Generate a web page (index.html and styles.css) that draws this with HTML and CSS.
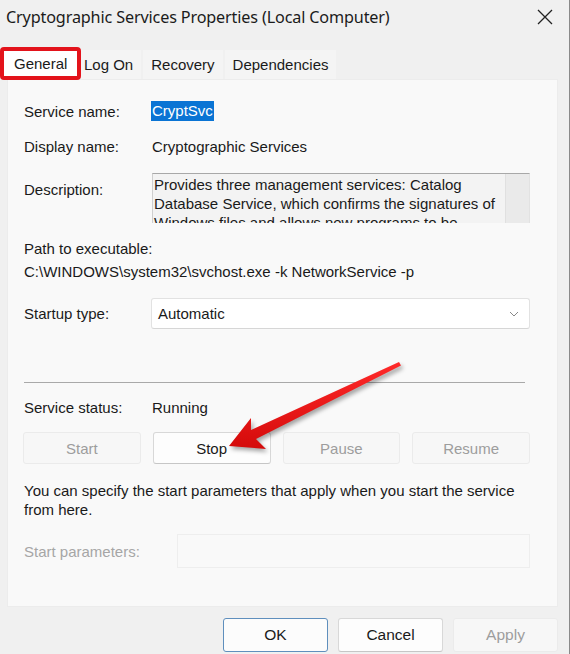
FILE: index.html
```html
<!DOCTYPE html>
<html>
<head>
<meta charset="utf-8">
<link rel="stylesheet" href="styles.css">
</head>
<body>
<div class="window">
  <header class="titlebar">
    <span class="title">Cryptographic Services Properties (Local Computer)</span>
    <svg class="close" width="16" height="16" viewBox="0 0 16 16"><path d="M1 1 L15 15 M15 1 L1 15" stroke="#222" stroke-width="1.3" fill="none"/></svg>
  </header>
  <nav class="tabs">
    <span class="tab active">General</span>
    <span class="tab">Log On</span>
    <span class="tab">Recovery</span>
    <span class="tab">Dependencies</span>
  </nav>
  <section class="panel">
    <div class="row r-service"><span class="label">Service name:</span><span class="sel">CryptSvc</span></div>
    <div class="row r-display"><span class="label">Display name:</span><span>Cryptographic Services</span></div>
    <div class="row r-desc"><span class="label desc-label">Description:</span>
      <div class="descbox">
        <div class="desctext">Provides three management services: Catalog Database Service, which confirms the signatures of Windows files and allows new programs to be installed.</div>
        <div class="scroll"></div>
      </div>
    </div>
    <div class="path-label">Path to executable:</div>
    <div class="path">C:\WINDOWS\system32\svchost.exe -k NetworkService -p</div>
    <div class="row r-startup"><span class="label">Startup type:</span>
      <div class="select"><span>Automatic</span>
        <svg width="10" height="6" viewBox="0 0 10 6"><path d="M1 1 L5 5 L9 1" stroke="#888" stroke-width="1" fill="none"/></svg>
      </div>
    </div>
    <hr class="sep">
    <div class="row r-status"><span class="label">Service status:</span><span>Running</span></div>
    <div class="btnrow">
      <span class="btn disabled">Start</span>
      <span class="btn">Stop</span>
      <span class="btn disabled">Pause</span>
      <span class="btn disabled">Resume</span>
    </div>
    <p class="hint">You can specify the start parameters that apply when you start the service from here.</p>
    <div class="row r-params"><span class="label params-label">Start parameters:</span><div class="input"></div></div>
  </section>
  <footer class="actions">
    <span class="btn big primary">OK</span>
    <span class="btn big">Cancel</span>
    <span class="btn big disabled">Apply</span>
  </footer>
  <svg class="arrow" width="570" height="654" viewBox="0 0 570 654">
    <defs>
      <linearGradient id="ag" x1="0" y1="0" x2="0" y2="1">
        <stop offset="0" stop-color="#ff2a2a"/>
        <stop offset="1" stop-color="#d40a0a"/>
      </linearGradient>
    </defs>
    <polygon points="229,446 251,418 251,430 399,362 401,365.5 256,439 266,449" fill="url(#ag)"/>
  </svg>
</div>
</body>
</html>
```

FILE: styles.css
```css
* { box-sizing: border-box; }
html, body { margin: 0; padding: 0; }
body {
  width: 570px;
  height: 654px;
  overflow: hidden;
  background: #f0f0f0;
  font-family: "Liberation Sans", Arial, sans-serif;
  font-size: 15px;
  color: #1a1a1a;
}
.window {
  position: relative;
  width: 570px;
  height: 654px;
  border-right: 1px solid #8a8a8a;
}
.titlebar {
  height: 36px;
  display: flex;
  align-items: center;
  justify-content: space-between;
  padding: 0 16px 2px 6px;
}
.title {
  font-family: "Noto Sans", "Open Sans", sans-serif;
  font-size: 16.2px;
  color: #1b1b1b;
  letter-spacing: -0.15px;
}
.tabs {
  display: flex;
  align-items: flex-start;
  height: 43px;
  padding-top: 14px;
}
.tab {
  display: flex;
  align-items: center;
  height: 29px;
  padding: 0 8px;
  background: #f4f4f4;
  color: #1a1a1a;
}
.tab + .tab { margin-left: 2px; }
.tab.active {
  position: relative;
  z-index: 1;
  height: 33px;
  margin-top: -3px;
  margin-right: -7px;
  width: 81px;
  padding-left: 10px;
  background: #fff;
  border: 4px solid #e3131b;
  border-radius: 4px;
}
.panel {
  margin: 0 11px 0 7px;
  height: 528px;
  background: #f9f9f9;
  border: 1px solid #ececec;
  padding: 12px 27px 0 16px;
}
.row {
  display: flex;
  align-items: center;
}
.label { width: 128px; flex: none; }
.r-service { height: 20px; margin-top: 9px; }
.sel {
  background: #0a74d4;
  color: #fff;
  padding: 0 1px;
  margin-left: -1px;
  line-height: 20px;
}
.r-display { height: 20px; margin-top: 15px; }
.r-desc { align-items: flex-start; margin-top: 17px; }
.desc-label { margin-top: 8px; }
.descbox {
  width: 379px;
  height: 50px;
  background: #f3f3f3;
  border-top: 1px solid #a8a8a8;
  border-left: 1px solid #cfcfcf;
  border-right: 1px solid #e2e2e2;
  display: flex;
  overflow: hidden;
}
.desctext {
  flex: 1;
  padding: 1px 0 0 1px;
  line-height: 19px;
  height: 49px;
  overflow: hidden;
}
.scroll {
  width: 24px;
  background: #eaeaea;
  border-left: 1px solid #e0e0e0;
}
.path-label { margin-top: 16px; line-height: 20px; }
.path { margin-top: 3px; line-height: 20px; }
.r-startup { margin-top: 16px; }
.select {
  width: 381px;
  height: 31px;
  margin-left: -1px;
  background: #fff;
  border: 1px solid #e2e2e2;
  border-bottom-color: #d6d6d6;
  border-radius: 3px;
  display: flex;
  align-items: center;
  justify-content: space-between;
  padding: 0 10px 0 6px;
}
.sep {
  margin: 53px 5px 0 0;
  border: 0;
  border-top: 1px solid #a9a9a9;
  height: 0;
}
.r-status { margin-top: 14px; height: 20px; }
.btnrow {
  display: grid;
  grid-template-columns: repeat(4, 1fr);
  gap: 12px;
  margin-top: 15px;
  margin-left: -1px;
}
.btn {
  display: flex;
  align-items: center;
  justify-content: center;
  height: 32px;
  background: #fdfdfd;
  border: 1px solid #d8d8d8;
  border-bottom-color: #c6c6c6;
  border-radius: 3px;
  color: #1a1a1a;
}
.btn.disabled {
  background: #f7f7f7;
  border-color: #ebebeb;
  color: #9d9d9d;
}
.hint {
  margin: 17px 0 0;
  line-height: 19px;
  width: 500px;
}
.r-params { margin-top: 15px; }
.params-label { width: 153px; color: #a6a6a6; }
.input {
  width: 355px;
  height: 34px;
  border: 1px solid #eeeeee;
  background: #f9f9f9;
}
.actions {
  display: flex;
  justify-content: flex-end;
  gap: 10px;
  padding: 11px 11px 0 0;
}
.btn.big {
  width: 105px;
  height: 34px;
  font-size: 15.5px;
}
.btn.primary {
  border: 1px solid #5f8fbd;
  background: #fcfcfc;
}
.arrow {
  position: absolute;
  left: 0;
  top: 0;
  pointer-events: none;
  filter: drop-shadow(2px 3px 2px rgba(0,0,0,0.35));
}
```
